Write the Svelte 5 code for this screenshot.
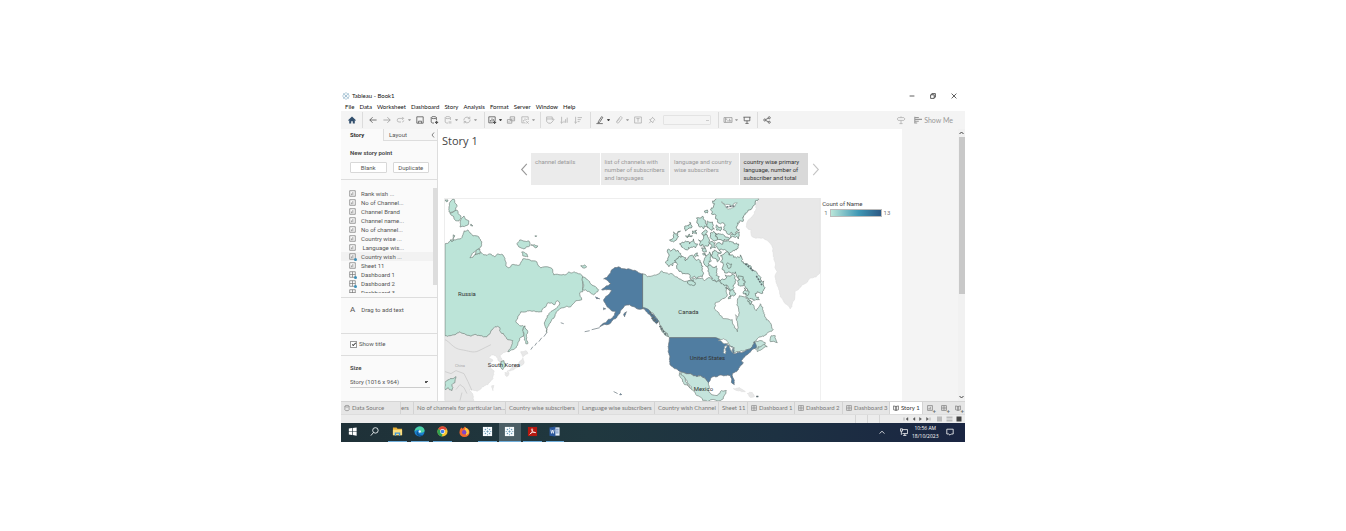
<script>
  const menus = ['File', 'Data', 'Worksheet', 'Dashboard', 'Story', 'Analysis', 'Format', 'Server', 'Window', 'Help'];

  const toolbar = [
    { name: 'start', items: [['home', 'Start page', 'navy']] },
    { name: 'edit', items: [['back', 'Undo', 'dark'], ['forward', 'Redo', 'mid'], ['replay', 'Replay', 'light'], 'caret', ['save', 'Save', 'dark'], ['source', 'New data source', 'dark'], ['pause', 'Pause updates', 'light'], 'caret', ['refresh', 'Run update', 'light'], 'caret'] },
    { name: 'sheet', items: [['chart', 'New worksheet', 'dark'], 'caret-dark', ['duplicate', 'Duplicate', 'mid'], ['clear', 'Clear sheet', 'light'], 'caret'] },
    { name: 'sort', items: [['swap', 'Swap', 'light'], ['asc', 'Sort ascending', 'light'], ['desc', 'Sort descending', 'light']] },
    { name: 'format', items: [['pen', 'Highlight', 'dark'], 'caret-dark', ['clip', 'Group members', 'light'], 'caret', ['label', 'Show labels', 'light'], ['pin', 'Fix axes', 'light'], 'fit'] },
    { name: 'show', items: [['cards', 'Show cards', 'mid'], 'caret', ['present', 'Presentation mode', 'dark']] },
    { name: 'share', items: [['share', 'Share', 'dark']] }
  ];

  const icons = {
    home: '<path d="M0 5.200 5 .6l5 4.600-.8.8L8.500 5.400V9.500H6V6.500H4v3H1.500V5.400L.8 6z" fill="currentColor" stroke="none"/>',
    back: '<path d="M9.500 5H1M4.500 1.500 1 5l3.500 3.500"/>',
    forward: '<path d="M.5 5H9M5.500 1.500 9 5 5.500 8.500"/>',
    replay: '<path d="M5 7.500H2.500a2.200 2.200 0 0 1 0-4.500H8M6.500 1.200 8.300 3 6.500 4.800M8.500 5.500a2.200 2.200 0 0 1-2 2"/>',
    save: '<path d="M1 1h8v8H1zM3 9V6.500h4V9"/>',
    source: '<path d="M1.500 2v5.500c0 1 2 1.500 3.500 1.300M8 2v3"/><ellipse cx="4.800" cy="2" rx="3.200" ry="1.300"/><path d="M8.200 6v4M6.200 8h4" stroke-width="1.500"/>',
    pause: '<path d="M1.500 2v5.500c0 1 2 1.500 3.500 1.300M8 2v3"/><ellipse cx="4.800" cy="2" rx="3.200" ry="1.300"/><path d="M6.500 6.500v3M8.500 6.500v3"/>',
    refresh: '<path d="M1 5.500A4 4 0 0 1 8.200 3M9 4.500A4 4 0 0 1 1.800 7M8.500.8V3.300H6M1.500 9.200V6.800H4"/>',
    chart: '<path d="M6 8.500H1V1h8v5M3 7V5M5 7V3M7 6V4"/><path d="M8.200 6v4M6.200 8h4" stroke-width="1.500"/>',
    duplicate: '<path d="M4 1h5.500v5H4zM.5 4.500H6V9H.5zM2.500 8V6.500M6 4.500V3M7.800 4.500V3"/>',
    clear: '<path d="M5.500 8.500H1V1h8v4M3 7V5M5 6V3M7 5V4M6.500 6.500l3 3m0-3-3 3"/>',
    swap: '<path d="M.8 1.200h7v2.500h-7zM.8 3.700v3L3 9h3l3-3V3.500M7.300 4.800 9 3.300l1.500 1.500"/>',
    asc: '<path d="M2 1v8M.5 7.500 2 9l1.500-1.500M5 8.500V6M7 8.500V4M9 8.500V2"/>',
    desc: '<path d="M2 1v8M.5 7.500 2 9l1.500-1.500M4.500 2H10M4.500 4.500H8.500M4.500 7H7"/>',
    pen: '<path d="M3 7 7 .8l1.500 1L4.500 8 2.500 8.500zM.5 9.500h8"/>',
    clip: '<path d="m2 7 4-5.500a1.500 1.500 0 0 1 2.500 1.700L4.500 8.500A1.300 1.300 0 0 1 2.300 7.200L6 3"/>',
    label: '<path d="M.8 1.200h8.400v7.600H.8zM3 3.200h4M5 3.200v4"/>',
    pin: '<path d="M5 1.200 9 5M5.500 2 4 4 2 4.500l4 4 .5-2L8.500 4.500M3.800 6.500 1.500 9"/>',
    cards: '<path d="M0 2h10v6H0zM2 2v6M2 4h2M5 7V5M7 7V3.500M8.500 7V5"/>',
    present: '<path d="M.5 1.500h9M1.500 1.500V6h7V1.500M5 6v3M3 9.300h4"/>',
    share: '<circle cx="2.200" cy="5" r="1.300"/><circle cx="7.800" cy="2.200" r="1.300"/><circle cx="7.800" cy="7.800" r="1.300"/><path d="m3.400 4.400 3.200-1.600M3.400 5.600l3.200 1.600"/>',
    guide: '<path d="M5 .5v1.500M5 5.500v4M1.500 2h7L10 3.700 8.500 5.500h-7L.3 3.700zM3 9.500h4"/>',
    showme: '<path d="M1 1v8.500M1 1.800h5M1 4.200h9M1 6.500h5M1 8.800h3" stroke-width="1.400"/>',
    sheet: '<path d="M1 1h8v8H1zM3.500 7.500V5M5.500 7.500V3"/>',
    grid: '<path d="M1 1h8v8H1zM1 5h8M5 1v8"/>',
    story: '<path d="M5 2.500V9L1 8V1.500zM5 2.500V9l4-1V1.500z"/>',
    cylinder: '<ellipse cx="5" cy="2" rx="3.500" ry="1.400"/><path d="M1.500 2v6c0 2 7 2 7 0V2"/>'
  };

  const points = [
    ['Rank wish ...', 0], ['No of Channel...', 0], ['Channel Brand', 0], ['Channel name...', 0],
    ['No of channel...', 0], ['Country wise ...', 0], ['\u00a0Language wis...', 0], ['Country wish ...', 1],
    ['Sheet 11', 0], ['Dashboard 1', 2], ['Dashboard 2', 2], ['Dashboard 3', 2]
  ];

  const captions = ['channel details', 'list of channels with number of subscribers and languages', 'language and country wise subscribers', 'country wise primary language, number of subscriber and total'];

  const sheets = [
    ['', 'ers'], ['', 'No of channels for particular lan...'], ['', 'Country wise subscribers'],
    ['', 'Language wise subscribers'], ['', 'Country wish Channel'], ['', 'Sheet 11'],
    ['grid', 'Dashboard 1'], ['grid', 'Dashboard 2'], ['grid', 'Dashboard 3'], ['story', 'Story 1']
  ];

  // Splits each coast segment and shifts its midpoints, so that outlines look ragged.
  // The shift depends on the two ends only, and straight parallels and meridians stay straight.
  function split(a, b, out, rough) {
    const dx = b[0] - a[0], dy = b[1] - a[1];
    const len = Math.hypot(dx, dy);
    if (len < 2 || ((dx === 0 || dy === 0) && len > 14)) { out.push(b); return; }
    const flip = a[0] > b[0] || (a[0] === b[0] && a[1] > b[1]) ? -1 : 1;
    const n = Math.sin((a[0] + b[0]) * 12.9898 + (a[1] + b[1]) * 78.233) * 43758.5453;
    const k = (n - Math.floor(n) - 0.5) * rough * flip;
    const m = [(a[0] + b[0]) / 2 - dy * k, (a[1] + b[1]) / 2 + dx * k];
    split(a, m, out, rough);
    split(m, b, out, rough);
  }
  function coast(text, rough = 0.36) {
    const p = text.split(' ').map((s) => s.split(',').map(Number));
    const out = [p[0]];
    p.forEach((a, i) => split(a, p[(i + 1) % p.length], out, rough));
    return 'M' + out.map((q) => q[0].toFixed(1) + ' ' + q[1].toFixed(1)).join('L') + 'Z';
  }

  const plain = [
    '445,336 450,336 455,335 460,332 466,335 472,336 480,336 487,337 491,331 495,327 500,328 501,333 505,336 508,340 513,341 512,345 508,352 503,353 500,356 503,361 501,363 498,359 496,356 492,355 489,358 493,361 489,364 494,371 493,379 488,385 480,390 474,391 469,390 473,396 474,401 445,401',
    '760,197 757,204 755,212 749,220 747,227 752,230 753,237 760,238 767,240 773,247 775,258 776,266 778,272 776,278 778,286 781,297 786,304 791,309 793,304 796,291 803,285 810,279 817,277 821,272 821,197',
    '521,352 526,351 528,354 523,357', '523,358 524,364 519,367 511,371 507,372 512,368 518,365', '505,373 509,373 507,377', '492,386 494,386 493,391', '734,389 740,388 746,392 742,392', '748,394 753,393 755,397 750,397'
  ].map((t) => coast(t));

  const mint = [
    '445,244 449,242 452,240 456,240 460,239 463,235 464,231 468,230 470,233 473,236 479,237 482,242 481,247 477,250 472,254 470,258 475,255 480,252 484,255 490,254 495,257 498,254 503,255 505,260 506,266 509,268 512,265 520,265 523,259 530,260 537,262 541,268 548,267 553,270 554,275 561,275 566,275 569,272 577,273 583,277 583,292 580,293 582,300 576,301 571,307 563,308 560,309 556,314 551,322 547,333 546,320 550,313 556,309 560,304 558,301 555,305 552,303 548,303 544,308 542,312 536,312 528,311 521,312 516,322 520,326 525,327 524,335 518,344 513,350 508,352 512,345 513,341 508,340 505,336 501,333 500,328 495,327 491,331 487,337 480,336 472,336 466,335 460,332 455,335 450,336 445,336',
    '583,277 588,280 591,284 597,288 599,290 596,293 594,295 590,292 586,290 583,290',
    '525,326 528,332 527,338 528,344 526,344 524,336',
    '451,201 454,199 457,205 456,211 449,212 449,207', '450,213 457,210 461,216 459,221 455,220', '460,227 462,218 464,216 469,221 468,225', '445,200 448,200 447,202',
    '517,244 520,240 529,241 530,246 524,249 519,247', '531,245 538,246 536,248', '522,252 527,254 528,257 523,256', '535,236 537,236 536,237', '471,224 473,226 471,226', '476,251 480,249 480,254 475,255', '453,235 455,236 453,239', '450,240 454,240 452,242',
    '581,266 585,265 587,267 583,268', '501,362 504,361 506,366 503,370 501,368', '445,384 451,379 456,377 455,383 452,385 452,391 448,388 445,390'
  ].map((t) => coast(t));

  const canada = [
    '643,274 648,277 653,276 657,275 662,271 666,273 673,274 682,280 689,281 697,279 703,278 705,281 711,278 717,282 722,281 727,283 727,290 728,295 723,299 716,303 715,309 720,315 727,319 733,320 735,328 738,332 738,323 737,318 740,313 739,308 738,302 740,296 745,297 750,300 754,305 757,311 761,304 764,312 767,320 771,323 774,330 767,335 762,337 758,339 754,343 760,341 766,343 763,347 757,350 753,347 748,350 742,351 733,353 735,348 728,344 722,340 716,338 670,338 664,331 660,325 657,318 651,312 643,309',
    '772,336 776,336 778,343 771,342', '759,347 764,345 768,347 762,350 758,352', '661,327 665,332 669,337 665,335',
    '681,372 687,374 694,376 701,376 706,379 709,383 709,390 712,395 718,396 722,391 727,391 725,396 721,401 708,402 700,397 692,390 688,383', '680,373 683,376 686,382 691,389 685,385 681,378'
  ].map((t) => coast(t));

  const arctic = [
    '668,250 674,249 680,253 678,260 673,266 667,264 669,257', '677,266 679,257 686,261 694,256 700,260 703,269 700,277 691,279 683,274 679,270',
    '680,244 686,241 690,244 694,239 698,244 696,248 688,250 682,247', '670,240 674,232 681,231 679,237 674,242', '685,227 690,222 692,228 686,231', '697,218 703,216 708,226 704,229 699,224',
    '699,240 706,234 710,240 709,246 705,248 700,245', '708,221 713,222 715,229 710,229', '703,254 710,252 712,261 708,267 704,262', '713,252 722,252 718,262 713,258', '711,265 717,266 720,277 717,282 712,277',
    '711,233 717,234 718,240 712,239', '710,243 716,243 716,248 711,249', '718,243 728,241 737,243 737,250 724,250 718,248', '716,233 724,235 740,232 739,239 728,240 718,239',
    '713,201 718,198 759,198 755,205 750,210 747,213 744,220 738,223 740,230 735,235 728,234 724,230 726,225 718,222 712,214 714,207',
    '721,256 727,252 733,255 741,255 744,262 752,268 758,274 764,285 764,291 758,292 760,300 752,299 746,295 748,289 744,279 736,272 729,272 723,268 721,262',
    '726,288 731,287 736,295 729,299', '726,275 733,274 736,283 730,289 725,286', '739,276 744,277 744,286 739,283', '695,255 698,253 699,256 696,257', '686,236 690,234 693,236 688,238',
    '705,211 708,210 708,213 706,213', '693,231 697,230 697,234 693,234', '703,235 706,230 708,232 706,235', '728,263 732,264 731,268 728,267', '702,248 706,248 707,252 703,251', '748,301 753,302 751,305', '745,288 749,291 748,296 744,294', '717,225 722,227 721,231 717,230', '688,282 694,280 696,284 692,285'
  ].map((t) => coast(t, 0.8));

  const blue = [
    '643,274 638,272 632,270 625,269 619,267 612,270 609,275 604,279 608,281 611,284 607,286 602,290 607,290 612,291 610,294 606,297 604,301 607,306 611,310 616,312 613,318 606,323 600,327 607,325 617,318 621,311 625,306 630,305 636,308 643,309',
    '670,338 716,338 722,341 728,345 734,348 734,354 742,353 748,350 753,347 755,342 757,348 752,351 746,356 742,361 744,363 740,368 733,374 735,381 735,385 732,383 731,376 726,376 718,377 712,378 709,383 706,379 701,376 694,376 687,374 681,372 675,369 670,362 669,353 669,345',
    '643,308 650,311 655,316 659,322 657,324 651,316', '624,315 627,312 625,317', '604,308 606,309 604,310', '596,297 600,299 597,299', '621,394 622,395 620,395'
  ].map((t) => coast(t, 0.3));

  const lakes = ['719,341 724,339 729,343 725,344', '725,347 728,346 726,354 724,353', '730,346 734,348 733,353 731,350', '722,202 726,205 732,206 738,203 735,207 727,208', '736,315 738,318 737,320'].map((t) => coast(t));

  const tasks = ['windows', 'search', 'files', 'edge', 'chrome', 'firefox', 'tableau', 'tableau', 'acrobat', 'word'];
</script>

{#snippet icon(name)}
  <svg class="icon" viewBox="0 0 10 10" aria-hidden="true">{@html icons[name]}</svg>
{/snippet}

{#snippet sparkle()}
  <path d="M5 3.500v3M3.500 5h3M5 .3v1.800M5 7.900v1.800M.3 5h1.800M7.900 5h1.800M2.500 1.700v1.800M1.600 2.600h1.800M7.500 1.700v1.800M6.600 2.600h1.800M2.500 6.500v1.800M1.600 7.400h1.800M7.500 6.500v1.800M6.600 7.400h1.800" fill="none" stroke="#4b86a8" stroke-width=".7" />
{/snippet}

<main class="window">
  <header class="titlebar">
    <svg class="logo" viewBox="0 0 10 10" aria-hidden="true">{@render sparkle()}</svg>
    <span>Tableau - Book1</span>
    <div class="controls">
      <button aria-label="Minimize"><svg viewBox="0 0 10 10"><path d="M1 5h8" /></svg></button>
      <button aria-label="Restore"><svg viewBox="0 0 10 10"><path d="M1 3h6v6H1zM3 3V1h6v6H7" /></svg></button>
      <button aria-label="Close"><svg viewBox="0 0 10 10"><path d="m1 1 8 8M9 1 1 9" /></svg></button>
    </div>
  </header>

  <nav class="menubar">
    {#each menus as menu}<button>{menu}</button>{/each}
  </nav>

  <div class="toolbar">
    {#each toolbar as group}
      <div class="group {group.name}">
        {#each group.items as item}
          {#if item === 'fit'}
            <select class="fit" aria-label="Fit" disabled><option></option></select>
          {:else if typeof item === 'string'}
            <span class={item === 'caret' ? 'caret' : 'caret strong'}></span>
          {:else}
            <button class="tool {item[2]}" aria-label={item[1]}>{@render icon(item[0])}</button>
          {/if}
        {/each}
      </div>
    {/each}
    <div class="right">
      <button class="tool light" aria-label="Data guide">{@render icon('guide')}</button>
      <button class="showme">{@render icon('showme')}Show Me</button>
    </div>
  </div>

  <div class="workspace">
    <aside>
      <div class="panes">
        <button class="current">Story</button>
        <button class="other"><span>Layout</span><svg viewBox="0 0 4 6" aria-hidden="true"><path d="M3 .5 1 3l2 2.500" /></svg></button>
      </div>
      <section class="new">
        <h2>New story point</h2>
        <div class="pair"><button>Blank</button><button>Duplicate</button></div>
      </section>
      <section class="list">
        <ul>
          {#each points as [name, kind]}
            <li class:hover={kind === 1}>
              <span class="mark" class:dot={kind > 0}>{@render icon(kind === 2 ? 'grid' : 'sheet')}</span>{name}
            </li>
          {/each}
        </ul>
        <div class="thumb"></div>
      </section>
      <section class="drag"><span class="letter">A</span>Drag to add text</section>
      <section class="title-toggle">
        <input id="show-title" type="checkbox" checked /><label for="show-title">Show title</label>
      </section>
      <section class="size">
        <label for="story-size">Size</label>
        <select id="story-size"><option>Story (1016 x 964)</option></select>
      </section>
    </aside>

    <div class="story">
      <h1>Story 1</h1>
      <div class="navigator">
        <button class="step" aria-label="Previous"><svg viewBox="0 0 8 14"><path d="M7 1 1.500 7 7 13" stroke="#999" /></svg></button>
        {#each captions as caption, i}
          <button class="caption" class:active={i === 3}>{caption}</button>
        {/each}
        <button class="step" aria-label="Next"><svg viewBox="0 0 8 14"><path d="m1 1 5.500 6L1 13" stroke="#c4c4c4" /></svg></button>
      </div>
      <div class="view">
        <svg class="map" viewBox="444 198 378 203" role="img" aria-label="Map of name counts by country">
          <g class="plain">{#each plain as d}<path {d} />{/each}</g>
          <g class="borders">
            <path d="M445 340c5 2 8 9 16 10s12 4 18 1 8-4 12-6M445 372l6 2 5-3 8 3 4 8 4 9M456 390l4-5 4 3 3 6M460 401l2-8" />
          </g>
          <g class="mint">{#each mint as d}<path {d} />{/each}</g>
          <g class="canada">{#each canada as d}<path {d} />{/each}</g>
          <g class="canada arctic">{#each arctic as d}<path {d} />{/each}</g>
          <g class="blue">{#each blue as d}<path {d} />{/each}</g>
          <g class="lakes">{#each lakes as d}<path {d} />{/each}</g>
          <path class="chain" d="M547 333l-3 4M542 338l-3 4M537 343l-2 3M533 347l-2 3M600 328l-8 2M590 331l-5 1M561 323l3 1M614 392l4 2M757 397l2 0" />
          <path class="thick" d="M650 312l8 11M652 318l5 5M660 326l7 10M746 264l8 7M757 276l6 10M735 206l-8 1M757 397l2 0" />
          <path class="frame" d="M444.500 401V198.500H821.500V401" />
          <g class="labels">
            <text x="467" y="296">Russia</text>
            <text x="689" y="314">Canada</text>
            <text x="708" y="360">United States</text>
            <text x="504" y="367">South Korea</text>
            <text x="704" y="391">Mexico</text>
            <text class="faint" x="460" y="367">China</text>
          </g>
        </svg>
        <div class="legend">
          <div>Count of Name</div>
          <div class="scale"><span>1</span><i></i><span>13</span></div>
        </div>
      </div>
    </div>

    <div class="outside"></div>
    <div class="scroll"><svg viewBox="0 0 7 7"><path d="m1.500 4.500 2-2 2 2" /></svg><i></i><svg viewBox="0 0 7 7"><path d="m1.500 2.500 2 2 2-2" /></svg></div>
  </div>

  <nav class="sheets">
    <button class="data">{@render icon('cylinder')}Data Source</button>
    {#each sheets as [mark, name]}
      <button class:active={name === 'Story 1'}>{#if mark}{@render icon(mark)}{/if}{name}</button>
    {/each}
    <button class="add" aria-label="New worksheet">{@render icon('sheet')}</button>
    <button class="add" aria-label="New dashboard">{@render icon('grid')}</button>
    <button class="add" aria-label="New story">{@render icon('story')}</button>
  </nav>

  <div class="status">
    <i></i><i></i><i></i>
    <svg class="pager" viewBox="0 0 28 6" aria-hidden="true"><path d="M1 1.500v3M5 1.500v3L3 3zM12 1.500v3L10 3zM16.500 1.500v3L18.500 3zM23.500 1.500v3L25.500 3zM27 1.500v3" /></svg>
    <svg class="modes" viewBox="0 0 26 6" aria-hidden="true"><path d="M1 .5h5v5H1z" fill="#bbb" /><path d="M10.500.5h6v2h-6zM10.500 3.500h6v2h-6z" fill="#bbb" /><path d="M20.500.5h5v5h-5z" fill="#444" /></svg>
  </div>

  <footer class="taskbar">
    <div class="apps">
      {#each tasks as task, i}
        <button aria-label={task} class:running={i === 2 || i === 3 || i === 4 || i > 5} class:focused={i === 7}>
          <svg viewBox="0 0 12 12">
            {#if task === 'windows'}
              <path d="M2 2.800 5.500 2.300V5.700H2zM6.200 2.200 10.500 1.600V5.700H6.200zM2 6.400H5.500V9.800L2 9.300zM6.200 6.400H10.500V10.500L6.200 9.900z" fill="#fff" />
            {:else if task === 'search'}
              <circle cx="7" cy="4.800" r="3" fill="none" stroke="#e8eef0" /><path d="m5 7-3 3.500" stroke="#e8eef0" />
            {:else if task === 'files'}
              <path d="M1 1.500h4l1 1.500h5v7H1z" fill="#e9ae34" /><path d="M1 4h10v6H1z" fill="#fbdc7c" /><path d="M3 7h6v3.500H7.500V8.500h-3v2H3z" fill="#3f96d5" />
            {:else if task === 'edge'}
              <circle cx="6" cy="6" r="5.500" fill="#1b82cf" /><path d="M.6 6C1 2 4 .5 6.500.5c3 0 5 2.200 5 4.500 0 2-3 3-4.500 2C8.500 4.500 4 2.500.6 6z" fill="#4bd0a2" /><path d="M4.500 5.500C3.500 8.500 6 10.500 10 9.500 8 12 4 11.500 3 9c-.5-1.500 0-3 1.500-3.500z" fill="#105496" /><circle cx="6.300" cy="6" r="1.300" fill="#e9fbff" />
            {:else if task === 'chrome'}
              <circle cx="6" cy="6" r="5.500" fill="#f5c52f" /><path d="M6 6 1.200 3.200a5.500 5.500 0 0 1 9.600 0z" fill="#dd473a" /><path d="M6 6 1.200 3.200A5.500 5.500 0 0 0 5.500 11.500z" fill="#2fa252" /><circle cx="6" cy="6" r="2.600" fill="#fff" /><circle cx="6" cy="6" r="2" fill="#3d7de8" />
            {:else if task === 'firefox'}
              <path d="M1 4 2.500 1.500 4 3 6.500.5 8 2.500c2.500.5 3.500 2 3.500 4.500a5.500 5 0 0 1-11 0z" fill="#f3672f" /><path d="M7 1.500c3 1 4.500 4 3.500 6.500L8 10 6 5z" fill="#ffc83d" /><circle cx="5.700" cy="6.800" r="2.400" fill="#8147c9" />
            {:else if task === 'tableau'}
              <path d="M1 1h10v10H1z" fill="#f7fbfd" /><g transform="translate(1.500 1.500) scale(.9)">{@render sparkle()}</g>
            {:else if task === 'acrobat'}
              <path d="M1 1h10v10H1z" fill="#b5180f" /><path d="M3 9c3-2 4-6 2.500-6S5 7 9.500 7.200C7 6 4 7.500 3 9z" fill="none" stroke="#fff" stroke-width=".8" />
            {:else}
              <path d="M5 1.500h6.500v9H5z" fill="#e7effa" /><path d="M7.500 3.500h3M7.500 5.500h3M7.500 7.500h3" stroke="#2b579a" stroke-width=".7" /><path d="M.5 1.500 7 .5v11L.5 10.500z" fill="#2b579a" /><path d="m2 4 .8 4 1-3.500 1 3.500.8-4" fill="none" stroke="#fff" stroke-width=".8" />
            {/if}
          </svg>
        </button>
      {/each}
    </div>
    <div class="tray">
      <svg viewBox="0 0 10 10"><path d="M2 7l3-3 3 3" /></svg>
      <svg class="net" viewBox="0 0 10 10"><path d="M3 2h6.500v5H3M6 7v2M4 9.300h4M.5 1h2.500v3H.5zM1.700 4v4.500" /></svg>
      <div class="clock"><span>10:56 AM</span><span>18/10/2023</span></div>
      <svg class="note" viewBox="0 0 10 10"><path d="M1 1.500h8v6H6.500L5 9 3.500 7.500H1z" /></svg>
    </div>
  </footer>
</main>

<style>
  :global(body) { background: #fff; }
  .window { margin: 90px 381px 0 341px; font: 6px/8px Roboto, sans-serif; color: #555; background: #fff; }
  .window :is(button, select, input) { font: inherit; color: inherit; border: 0; padding: 0; margin: 0; background: none; border-radius: 0; }
  svg { display: block; }
  .icon { width: 8px; height: 8px; fill: none; stroke: currentColor; stroke-width: 1; overflow: visible; flex: none; }

  .titlebar { display: flex; align-items: center; gap: 2px; height: 12px; padding: 0 8px 0 1px; color: #111; font-family: Lato, sans-serif; }
  .titlebar .logo { width: 8px; height: 8px; }
  .controls { display: flex; gap: 15px; margin-left: auto; }
  .controls svg { width: 6px; height: 6px; fill: none; stroke: #222; stroke-width: 1.200; }
  .menubar { display: flex; gap: 5px; height: 9px; padding: 0 4px; font-family: Lato, sans-serif; }
  .menubar button { color: #111; line-height: 8px; height: 9px; }

  .toolbar { display: flex; align-items: center; height: 18px; background: #f4f4f4; padding-right: 12px; }
  .group { display: flex; align-items: center; gap: 4px; height: 16px; border-left: 1px solid #dcdcdc; padding: 0 7px 0 4px; box-sizing: border-box; }
  .group.start { border: 0; padding: 0 5px 0 6px; }
  .group.edit { padding-left: 5px; }
  .group.sheet { padding: 0 5px 0 2px; }
  .group.show { padding-right: 5px; }
  .tool { width: 10px; display: grid; place-items: center; }
  .window .navy { color: #324f6d; }
  .window .dark { color: #555; }
  .window .mid { color: #999; }
  .window .light { color: #b0b0b0; }
  .caret { border: 1px solid transparent; border-top: 2px solid #aaa; border-bottom: 0; width: 1px; margin-left: -2px; }
  .caret.strong { border-top-color: #444; }
  .window .fit { width: 48px; height: 10px; border: 1px solid #ddd; border-radius: 1px; margin-left: 2px; appearance: none; background: linear-gradient(#bbb, #bbb) 42px 4px / 3px 1px no-repeat; }
  .right { display: flex; align-items: center; gap: 8px; margin-left: auto; }
  .window .right .showme { display: flex; align-items: center; gap: 2px; color: #999; font-family: Lato, sans-serif; font-size: 7px; }

  .workspace { display: grid; grid-template-columns: 97px minmax(0, 464fr) minmax(0, 56fr) 7px; }
  aside { background: #fafafa; border-right: 1px solid #ddd; display: flex; flex-direction: column; }
  .panes { display: flex; height: 12px; }
  .panes button { box-sizing: border-box; }
  .window .current { width: 42px; padding-left: 9px; text-align: left; color: #222; font-weight: 600; }
  .window .other { flex: 1; display: flex; align-items: center; justify-content: space-between; padding: 0 2px 0 5px; border: solid #ddd; border-width: 0 0 1px 1px; background: #f7f7f7; }
  .other svg { width: 4px; height: 6px; fill: none; stroke: #666; stroke-width: .8; }
  section { border-bottom: 1px solid #ddd; box-sizing: border-box; }
  .new { height: 39px; padding: 8px 8px 0 9px; }
  h2 { margin: 0 0 5px; font-size: 6px; line-height: 8px; font-weight: 600; color: #444; }
  .pair { display: flex; gap: 6px; }
  .pair button { flex: 1; height: 11px; border: 1px solid #d8d8d8; border-radius: 1px; background: #fff; }
  .list { position: relative; height: 118px; padding: 9px 0 4px; }
  ul { list-style: none; margin: 0; padding: 0; height: 104px; overflow: hidden; }
  li { display: flex; align-items: center; gap: 5px; height: 9px; line-height: 9px; padding-left: 8px; white-space: pre; }
  li.hover { background: #f2f2f2; }
  .mark { position: relative; color: #777; }
  .mark .icon { width: 7px; height: 7px; }
  .dot::after { content: ''; position: absolute; right: -1px; bottom: -1px; width: 3px; height: 3px; border-radius: 50%; background: #3d8fb8; }
  .thumb { position: absolute; right: 0; top: 8px; width: 4px; height: 97px; background: #ddd; }
  .drag { display: flex; gap: 6px; height: 36px; padding: 8px 0 0 9px; }
  .letter { font-size: 8px; }
  .title-toggle { display: flex; align-items: center; gap: 2px; height: 22px; padding: 0 0 1px 9px; }
  .window .title-toggle input { appearance: none; width: 7px; height: 7px; border: 1px solid #999; background: #fff; display: grid; place-items: center; }
  .title-toggle input:checked::after { content: ''; width: 3px; height: 1px; border: solid #444; border-width: 0 0 1px 1px; rotate: -45deg; }
  .size { display: flex; flex-direction: column; gap: 4px; padding: 8px 7px 0 9px; border: 0; }
  .size label { font-weight: 600; color: #444; }
  .window .size select { appearance: none; height: 12px; border-bottom: 1px solid #ccc; background: conic-gradient(from -45deg at 50% 100%, #555 90deg, transparent 0) right 2px center / 4px 2px no-repeat; }

  .story { min-width: 0; }
  h1 { margin: 0; padding: 4px; font: 11px/16px "Open Sans", sans-serif; color: #444; }
  .navigator { display: flex; gap: 1px; height: 32px; padding: 0 80px 0 79px; }
  .step { flex: none; width: 13px; display: grid; place-items: center; }
  .step svg { width: 8px; height: 13px; fill: none; stroke-width: 1.200; }
  .window .caption { flex: 1 1 0; min-width: 0; display: flex; padding: 5px 4px 0 4px; background: #ebebeb; color: #999; text-align: left; line-height: 8px; overflow: hidden; }
  .window .caption.active { background: #d9d9d9; color: #333; }
  .view { display: flex; margin: 13px 0 0 6px; }
  .map { flex: 378 1 0; min-width: 0; }
  .legend { flex: 80 1 0; padding: 2px 0 0 1px; line-height: 8px; color: #444; white-space: nowrap; }
  .scale { display: flex; align-items: center; gap: 2px; padding: 1px 0 0 2px; }
  .scale i { flex: 0 1 50px; height: 6px; border: 1px solid #bbb; background: linear-gradient(90deg, #b9e5d8, #3f98b5 55%, #2c5985); }
  .scale span { color: #777; }
  .map path { stroke-width: .7; stroke-linejoin: round; }
  .plain path { fill: #e8e8e8; stroke: #e0e0e0; }
  .borders path { fill: none; stroke: #c6c6c6; }
  .mint path { fill: #bce4d8; stroke: #74837e; }
  .canada path { fill: #c4e4dc; stroke: #74837e; }
  .arctic path { fill: #bfe4da; stroke: #63736e; }
  .blue path { fill: #507da1; stroke: #66727a; }
  .lakes path { fill: #fff; stroke: #8d9895; }
  .map .chain { fill: none; stroke: #65737a; }
  .map .thick { fill: none; stroke: #5e6c70; stroke-width: 1.500; stroke-dasharray: 2 1; }
  .map .frame { fill: none; stroke: #e5e5e5; }
  .labels { font-size: 6px; fill: #333; text-anchor: middle; }
  .labels .faint { fill: #aaa; font-size: 4px; }
  .outside { background: #f4f4f4; }
  .scroll { display: flex; flex-direction: column; background: #f1f1f1; }
  .scroll i { flex: 0 0 157px; background: #c8c8c8; margin-left: 1px; }
  .scroll svg { width: 7px; height: 8px; fill: none; stroke: #444; }
  .scroll svg:last-child { margin-top: auto; }

  .sheets { display: grid; grid-template-columns: 60fr 13fr 92fr 73fr 76fr 64fr 29fr 47fr 48fr 47fr 33fr 14fr 14fr 14fr; height: 13px; background: #e6e6e6; border-top: 1px solid #d5d5d5; box-sizing: border-box; font-family: Lato, sans-serif; }
  .sheets button { min-width: 0; display: flex; align-items: center; gap: 2px; white-space: nowrap; overflow: hidden; }
  .window .sheets button { padding-left: 3px; border-right: 1px solid #d3d3d3; color: #777; }
  .window .sheets button:nth-child(2) { padding-left: 0; }
  .sheets .icon { width: 6px; height: 6px; }
  .window .sheets .data { padding-left: 3px; }
  .window .sheets .active { background: #fff; color: #333; }
  .window .sheets .add { justify-content: center; padding: 0; border: 0; color: #666; position: relative; }
  .add::after { content: '+'; position: absolute; right: 1px; bottom: 0; font-weight: 700; line-height: 6px; }

  .status { display: flex; align-items: center; justify-content: flex-end; height: 9px; background: #ececec; padding-right: 3px; border-top: 1px solid #ddd; box-sizing: border-box; }
  .status i { width: 11px; height: 8px; border-left: 1px solid #d5d5d5; }
  .status i:nth-child(3) { width: 23px; }
  .pager { width: 28px; height: 6px; fill: #555; stroke: #555; stroke-width: .4; }
  .modes { width: 26px; height: 6px; margin-left: 5px; }

  .taskbar { display: flex; justify-content: space-between; height: 19px; background: linear-gradient(90deg, #1f3138, #20383f 40%, #1d3142 70%, #1a2542); }
  .apps { display: grid; grid-template-columns: repeat(10, 1fr); width: 225px; }
  .apps button { display: grid; place-items: center; border-bottom: 1px solid transparent; }
  .apps svg { width: 11px; height: 11px; }
  .window .running { border-bottom: 1px solid #6faedb; margin: 0 2px; }
  .window .focused { background: #4b5e65; margin: 0; }
  .tray { display: flex; align-items: center; padding-right: 11px; color: #fff; }
  .tray svg { width: 8px; height: 8px; fill: none; stroke: #fff; stroke-width: 1; }
  .tray .net { margin: 0 4px 0 14px; }
  .clock { display: grid; justify-items: center; font: 5px/8px "Open Sans", sans-serif; width: 26px; }
  .tray .note { margin-left: 8px; }
</style>
